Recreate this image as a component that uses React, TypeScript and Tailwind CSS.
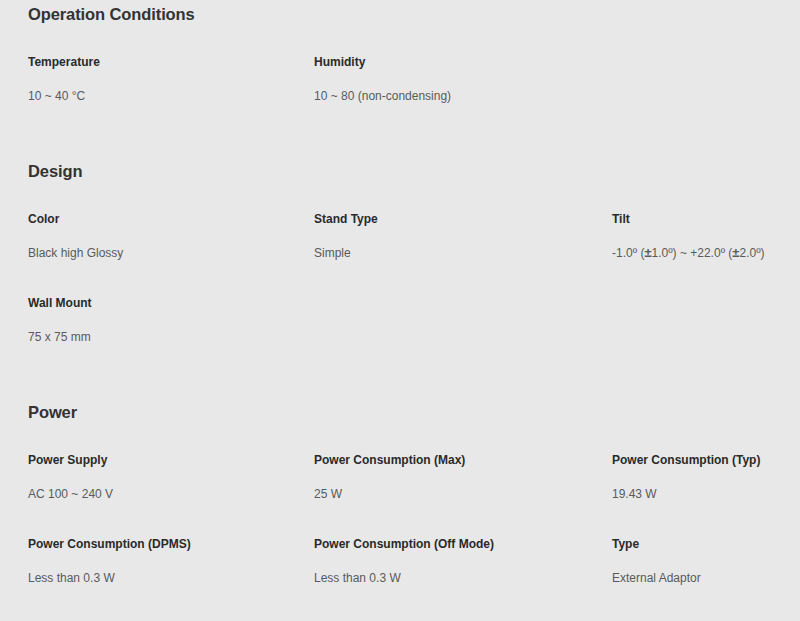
type Spec = { label: string; value: string };

const sections: { title: string; items: Spec[] }[] = [
  {
    title: 'Operation Conditions',
    items: [
      { label: 'Temperature', value: '10 ~ 40 °C' },
      { label: 'Humidity', value: '10 ~ 80 (non-condensing)' },
    ],
  },
  {
    title: 'Design',
    items: [
      { label: 'Color', value: 'Black high Glossy' },
      { label: 'Stand Type', value: 'Simple' },
      { label: 'Tilt', value: '-1.0º (±1.0º) ~ +22.0º (±2.0º)' },
      { label: 'Wall Mount', value: '75 x 75 mm' },
    ],
  },
  {
    title: 'Power',
    items: [
      { label: 'Power Supply', value: 'AC 100 ~ 240 V' },
      { label: 'Power Consumption (Max)', value: '25 W' },
      { label: 'Power Consumption (Typ)', value: '19.43 W' },
      { label: 'Power Consumption (DPMS)', value: 'Less than 0.3 W' },
      { label: 'Power Consumption (Off Mode)', value: 'Less than 0.3 W' },
      { label: 'Type', value: 'External Adaptor' },
    ],
  },
];

// the ± sign renders heavier on the source page
const renderValue = (value: string) =>
  value.split('±').map((part, i) => (
    <span key={i}>
      {i > 0 && <span className="font-bold text-[13px]">±</span>}
      {part}
    </span>
  ));

export default function App() {
  return (
    <div className="min-h-[621px] w-[800px] bg-[#e8e8e8] pl-[28px] font-['Liberation_Sans',Arial,sans-serif]">
      <div className="flex flex-col gap-[51px]">
        {sections.map((section) => (
          <section key={section.title}>
            <h2 className="text-[16.5px] leading-[28px] font-bold tracking-[-0.1px] text-[#333]">
              {section.title}
            </h2>
            <div className="mt-[24px] grid grid-cols-[286px_298px_1fr] gap-y-[30px]">
              {section.items.map((item) => (
                <div key={item.label}>
                  <p className="text-[12px] leading-[20px] font-bold text-[#2a2a2a]">
                    {item.label}
                  </p>
                  <p className="mt-[14px] text-[12px] leading-[20px] text-[#5a5a5a]">
                    {renderValue(item.value)}
                  </p>
                </div>
              ))}
            </div>
          </section>
        ))}
      </div>
    </div>
  );
}
